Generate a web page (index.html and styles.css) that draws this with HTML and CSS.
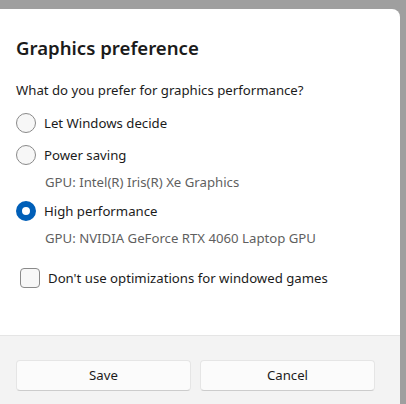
FILE: index.html
```html
<!DOCTYPE html>
<html lang="en">
<head>
  <meta charset="UTF-8">
  <title>Graphics preference</title>
  <link rel="stylesheet" href="styles.css">
</head>
<body>
  <div class="dialog">
    <div class="content">
      <h2 class="title">Graphics preference</h2>
      <p class="question">What do you prefer for graphics performance?</p>

      <!-- options -->
      <div class="option">
        <span class="radio"></span>
        <span class="label">Let Windows decide</span>
      </div>
      <div class="option">
        <span class="radio"></span>
        <span class="label">Power saving</span>
      </div>
      <div class="desc">GPU: Intel(R) Iris(R) Xe Graphics</div>
      <div class="option">
        <span class="radio checked"></span>
        <span class="label">High performance</span>
      </div>
      <div class="desc">GPU: NVIDIA GeForce RTX 4060 Laptop GPU</div>

      <div class="check-row">
        <span class="checkbox"></span>
        <span class="label">Don't use optimizations for windowed games</span>
      </div>
    </div>

    <div class="footer">
      <button class="btn">Save</button>
      <button class="btn">Cancel</button>
    </div>
  </div>
</body>
</html>
```

FILE: styles.css
```css
html, body {
  margin: 0;
  height: 100%;
}
body {
  background: #9f9f9f;
  font-family: "Noto Sans", "Open Sans", sans-serif;
  color: #1b1b1b;
  font-size: 13.2px;
  padding-top: 9px;
  padding-right: 6px;
  box-sizing: border-box;
  overflow: hidden;
}
.dialog {
  background: #fff;
  border-top-right-radius: 8px;
  height: 100%;
  display: flex;
  flex-direction: column;
}
.content {
  padding: 0 16px;
  height: 326px;
}
.title {
  margin: 0;
  padding-top: 25px;
  font-size: 18.6px;
  font-weight: 600;
  line-height: 28px;
}
.question {
  margin: 18px 0 0;
  line-height: 20px;
}
.option {
  display: flex;
  align-items: center;
  height: 32px;
}
.option:first-of-type {
  margin-top: 7px;
}
.radio {
  width: 18px;
  height: 18px;
  border: 1px solid #8a8a8a;
  border-radius: 50%;
  background: #f7f7f7;
  margin-right: 8px;
  flex: none;
}
.radio.checked {
  width: 8px;
  height: 8px;
  border: 6px solid #005fb8;
  background: #fff;
}
.desc {
  color: #5f5f5f;
  padding-left: 29px;
  line-height: 20px;
  margin-top: 1px;
  margin-bottom: 3px;
}
.check-row {
  display: flex;
  align-items: center;
  height: 32px;
  margin-top: 14px;
  padding-left: 4px;
}
.checkbox {
  width: 18px;
  height: 18px;
  border: 1px solid #8a8a8a;
  border-radius: 4px;
  background: #f7f7f7;
  margin-right: 8px;
  flex: none;
}
.footer {
  flex: 1;
  background: #f3f3f3;
  border-top: 1px solid #e5e5e5;
  display: flex;
  gap: 9px;
  padding: 24px 25px 0 16px;
}
.btn {
  width: 175px;
  height: 31px;
  padding-bottom: 3px;
  background: #fbfbfb;
  border: 1px solid #e5e5e5;
  border-bottom-color: #cccccc;
  border-radius: 4px;
  font-family: inherit;
  font-size: 13.2px;
  color: #1b1b1b;
}
```
